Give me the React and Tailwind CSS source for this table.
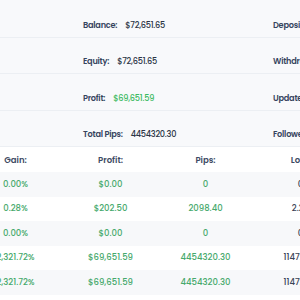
import React from 'react';

const summary = [
  { label: 'Balance:', value: '$72,651.65', side: 'Deposits:', sideValue: '$3,000.00' },
  { label: 'Equity:', value: '$72,651.65', side: 'Withdrawals:', sideValue: '$0.00' },
  { label: 'Profit:', value: '$69,651.59', green: true, side: 'Updated:', sideValue: '2 min ago' },
  { label: 'Total Pips:', value: '4454320.30', side: 'Followers:', sideValue: '0' },
];

const rows = [
  { gain: '0.00%', profit: '$0.00', pips: '0', lots: '0' },
  { gain: '0.28%', profit: '$202.50', pips: '2098.40', lots: '2.25' },
  { gain: '0.00%', profit: '$0.00', pips: '0', lots: '0' },
  { gain: '2,321.72%', profit: '$69,651.59', pips: '4454320.30', lots: '11472.64' },
  { gain: '2,321.72%', profit: '$69,651.59', pips: '4454320.30', lots: '11472.64' },
];

const App = () => {
  return (
    <div className="w-[300px] h-[300px] overflow-hidden bg-white font-['Poppins','Inter',sans-serif]">
      <div className="bg-[#f8f9fb] pt-[1px]">
        {summary.map((item) => (
          <div
            key={item.label}
            className="grid grid-cols-[190px_190px] pl-[83px] h-[36.5px] items-center border-b border-[#eceff3] whitespace-nowrap"
          >
            <div className="flex items-center gap-[8px] pt-[12px] text-[8.2px] tracking-[-0.03em]">
              <span className="font-semibold text-[#36445e]">{item.label}</span>
              <span className={`font-medium ${item.green ? 'text-[#3dbb63]' : 'text-[#2b3546]'}`}>
                {item.value}
              </span>
            </div>
            <div className="flex items-center gap-[8px] pt-[12px] text-[8.2px] tracking-[-0.03em]">
              <span className="font-semibold text-[#36445e]">{item.side}</span>
              <span className="font-medium text-[#2b3546]">{item.sideValue}</span>
            </div>
          </div>
        ))}
      </div>

      <div className="ml-[-32px] w-[380px] text-[8.5px] whitespace-nowrap">
        <div className="grid grid-cols-4 h-[25px] pt-[2px] items-center bg-white font-semibold text-[#3d4a63]">
          <div className="text-center">Gain:</div>
          <div className="text-center">Profit:</div>
          <div className="text-center">Pips:</div>
          <div className="text-center">Lots:</div>
        </div>
        {rows.map((r, i) => (
          <div
            key={i}
            className={`grid grid-cols-4 h-[24.5px] items-center font-medium ${i % 2 === 0 ? 'bg-[#f7f8fa]' : 'bg-white'}`}
          >
            <div className="text-center text-[#46a96c]">{r.gain}</div>
            <div className="text-center text-[#46a96c]">{r.profit}</div>
            <div className="text-center text-[#46a96c]">{r.pips}</div>
            <div className="text-center text-[#3a4456]">{r.lots}</div>
          </div>
        ))}
      </div>
    </div>
  );
};

export default App;
